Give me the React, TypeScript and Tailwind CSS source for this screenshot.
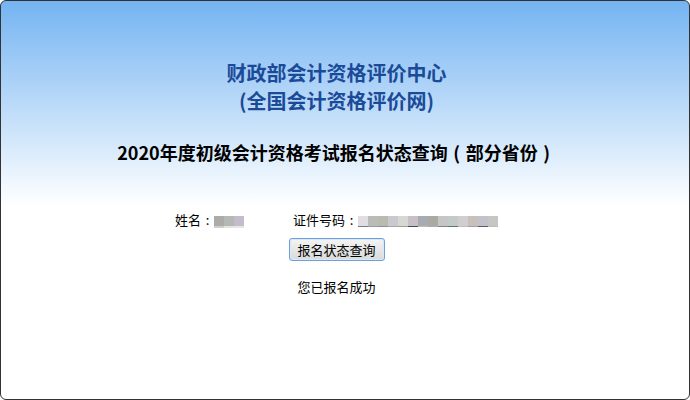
import React from "react";

// 打码后的姓名 / 证件号码色块
const NAME_BLOCKS = [
  { top: "#abaca7", line: "#cfd0ce" },
  { top: "#b4b9b6", line: "#e2e6e3" },
  { top: "#c4bccb", line: "#e8e4ec" },
];

const ID_BLOCKS = [
  { top: "#e2dde2", line: "#7b7b80" },
  { top: "#bdbbb8", line: "#9e9a96" },
  { top: "#b9bab0", line: "#8d8d99" },
  { top: "#c9cacf", line: "#a2a8ab" },
  { top: "#d7d8d3", line: "#a0a08a" },
  { top: "#c9c0c6", line: "#4a4858" },
  { top: "#a8abb0", line: "#bebdbd" },
  { top: "#a9aaa3", line: "#a9acaa" },
  { top: "#c5c6c6", line: "#8e7f83" },
  { top: "#c3cac9", line: "#5f7377" },
  { top: "#d2cdcf", line: "#c0bdbd" },
  { top: "#c7c0bc", line: "#a29e9c" },
  { top: "#c3c2ca", line: "#5f5a6a" },
  { top: "#c5c7c3", line: "#bcbcbc" },
];

function Masked({ blocks, lineH }: { blocks: { top: string; line: string }[]; lineH: number }) {
  return (
    <div className="flex shrink-0">
      {blocks.map((b, i) => (
        <div key={i} className="flex w-[10px] flex-col">
          <div className="h-[10px]" style={{ background: b.top }} />
          <div style={{ background: b.line, height: lineH }} />
        </div>
      ))}
    </div>
  );
}

// 居中的冒号 / 括号（模拟雅黑全角标点）
function Colon() {
  return <span className="inline-block w-[13px] text-center">:</span>;
}

function Paren({ c }: { c: string }) {
  return <span className="inline-block w-[18px] text-center">{c}</span>;
}

export default function App() {
  return (
    <div
      className="h-[400px] w-[690px] overflow-hidden rounded-[6px] border border-[#333] bg-[linear-gradient(to_bottom,#74b4f2_0px,#ffffff_205px)] pr-[17px] text-black"
      style={{ fontFamily: '"Noto Sans CJK SC", "Liberation Sans", sans-serif' }}
    >
      <div className="pt-[58px] text-center text-[20px] font-bold leading-[28px] text-[#1b4b98]">
        <div>财政部会计资格评价中心</div>
        <div>(全国会计资格评价网)</div>
      </div>
      <div className="mt-[23px] text-center text-[18px] font-bold leading-[28px]">
        2020年度初级会计资格考试报名状态查询
        <Paren c="(" />
        部分省份
        <Paren c=")" />
      </div>

      <div className="mx-auto mt-[44px] flex w-[323px] flex-col items-center text-[13px] leading-[20px]">
        <div className="flex w-full items-center whitespace-nowrap">
          <span className="shrink-0">
            姓名
            <Colon />
          </span>
          <div className="mt-[3px]">
            <Masked blocks={NAME_BLOCKS} lineH={2} />
          </div>
          <span className="ml-[49px] shrink-0">
            证件号码
            <Colon />
          </span>
          <div className="mt-[2px]">
            <Masked blocks={ID_BLOCKS} lineH={1} />
          </div>
        </div>
        <button
          type="button"
          className="mt-[8px] h-[23px] w-[96px] rounded-[3px] border border-[#6f9fd8] bg-[linear-gradient(to_bottom,#f4f4f4,#e6e6e6_50%,#dadada)] text-[13px] leading-[20px] shadow-[inset_0_0_0_1px_#d6e8fb]"
        >
          报名状态查询
        </button>
        <div className="mt-[16px]">您已报名成功</div>
      </div>
    </div>
  );
}
